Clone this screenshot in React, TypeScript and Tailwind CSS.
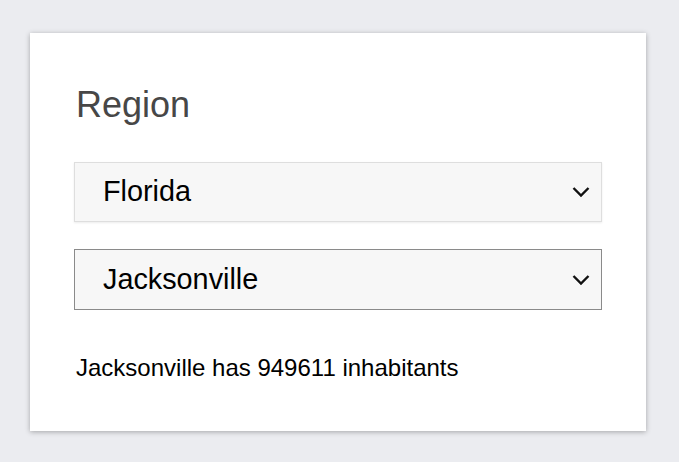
import { useState } from "react";

const cities: Record<string, { name: string; population: number }[]> = {
  Florida: [
    { name: "Jacksonville", population: 949611 },
    { name: "Miami", population: 442241 },
    { name: "Tampa", population: 384959 },
  ],
  Texas: [
    { name: "Houston", population: 2304580 },
    { name: "Austin", population: 961855 },
  ],
};

function Chevron() {
  return (
    <svg
      width="18"
      height="11"
      viewBox="0 0 18 11"
      className="pointer-events-none absolute right-[12px] top-1/2 -translate-y-1/2"
    >
      <path d="M1.5 1.5 L9 9 L16.5 1.5" fill="none" stroke="#111" strokeWidth="2.4" />
    </svg>
  );
}

export default function App() {
  const [region, setRegion] = useState("Florida");
  const [city, setCity] = useState("Jacksonville");
  const current = cities[region].find((c) => c.name === city) ?? cities[region][0];

  return (
    <div className="min-h-[462px] bg-[#ebecf0] pl-[30px] pt-[33px] font-['Liberation_Sans',Arial,sans-serif]">
      <div className="w-[616px] h-[398px] bg-white shadow-[0_1px_5px_rgba(0,0,0,0.3)] px-[44px] pt-[50px]">
        <h1 className="text-[36px] leading-[43px] text-[#474747] ml-[2px]">Region</h1>

        <div className="relative mt-[36px]">
          <select
            value={region}
            onChange={(e) => {
              setRegion(e.target.value);
              setCity(cities[e.target.value][0].name);
            }}
            className="appearance-none w-[528px] h-[60px] bg-[#f7f7f7] border border-[#dedede] shadow-[0_1px_2px_rgba(0,0,0,0.08)] pl-[28px] text-[28.8px] text-black outline-none"
          >
            {Object.keys(cities).map((r) => (
              <option key={r}>{r}</option>
            ))}
          </select>
          <Chevron />
        </div>

        <div className="relative mt-[27px]">
          <select
            value={city}
            onChange={(e) => setCity(e.target.value)}
            className="appearance-none w-[528px] h-[61px] bg-[#f7f7f7] border border-[#8a8a8a] pl-[28px] text-[28.8px] text-black outline-none"
          >
            {cities[region].map((c) => (
              <option key={c.name}>{c.name}</option>
            ))}
          </select>
          <Chevron />
        </div>

        <p className="mt-[40px] ml-[2px] text-[24px] text-black">
          {current.name} has {current.population} inhabitants
        </p>
      </div>
    </div>
  );
}
